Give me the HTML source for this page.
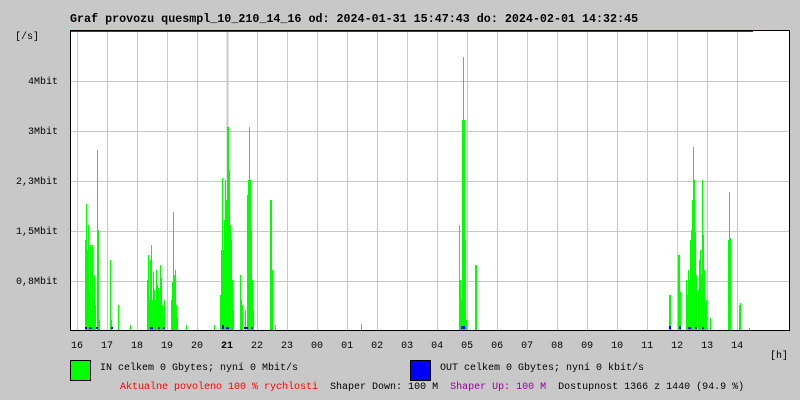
<!DOCTYPE html>
<html><head><meta charset="utf-8"><style>
body{margin:0;width:800px;height:400px;background:#c8c8c8;overflow:hidden;position:relative;font-family:"Liberation Mono",monospace;}
.t{position:absolute;font-size:10px;white-space:pre;line-height:12px;color:#000}
</style></head><body>
<div class="t" style="left:70px;top:13px;font-size:11.7px;font-weight:bold;">Graf provozu quesmpl_10_210_14_16 od: 2024-01-31 15:47:43 do: 2024-02-01 14:32:45</div>
<div class="t" style="left:15px;top:32px;">[/s]</div>
<div class="t" style="left:28px;top:77px;">4Mbit</div>
<div class="t" style="left:28px;top:127px;">3Mbit</div>
<div class="t" style="left:16px;top:177px;">2,3Mbit</div>
<div class="t" style="left:16px;top:227px;">1,5Mbit</div>
<div class="t" style="left:16px;top:277px;">0,8Mbit</div>
<svg style="position:absolute;left:0;top:0" width="800" height="400" shape-rendering="crispEdges">
<rect x="70" y="30" width="720" height="300" fill="#fff"/>
<g stroke="#c8c8c8" stroke-width="1">
<path d="M70 81.5H790M70 131.5H790M70 181.5H790M70 231.5H790M70 281.5H790"/>
<path d="M77.5 31V330M107.5 31V330M137.5 31V330M167.5 31V330M197.5 31V330M257.5 31V330M287.5 31V330M317.5 31V330M347.5 31V330M377.5 31V330M407.5 31V330M437.5 31V330M467.5 31V330M497.5 31V330M527.5 31V330M557.5 31V330M587.5 31V330M617.5 31V330M647.5 31V330M677.5 31V330M707.5 31V330M737.5 31V330"/>
<path d="M227.5 31V330" stroke-width="2"/>
</g>
<g stroke="#00ff00" stroke-width="1.2" fill="none">
<path d="M85.5 330V240M86.5 330V204M87.5 330V250M88.5 330V225M89.5 330V290M90.5 330V245M91.5 330V310M92.5 330V245M93.5 330V300M94.5 330V275M95.5 330V305M97.5 330V150M98.5 330V230M99.5 330V320M110.5 330V260M111.5 330V320M118.5 330V305M130.5 330V325M147.5 330V280M148.5 330V255M149.5 330V300M150.5 330V260M151.5 330V245M152.5 330V300M153.5 330V272M154.5 330V290M155.5 330V300M156.5 330V270M157.5 330V285M158.5 330V288M159.5 330V300M160.5 330V265M161.5 330V278M162.5 330V305M163.5 330V318M164.5 330V300M171.5 330V300M172.5 330V282M173.5 330V212M174.5 330V275M175.5 330V270M176.5 330V305M177.5 330V318M186.5 330V325M214.5 330V325M220.5 330V295M221.5 330V250M222.5 330V178M223.5 330V250M224.5 330V220M225.5 330V180M226.5 330V200M227.5 330V127M228.5 330V127M229.5 330V170M230.5 330V225M231.5 330V240M232.5 330V280M233.5 330V310M240.5 330V275M241.5 330V300M242.5 330V305M245.5 330V310M247.5 330V195M248.5 330V180M249.5 330V127M250.5 330V180M251.5 330V230M252.5 330V280M253.5 330V310M270.5 330V200M271.5 330V200M272.5 330V270M275.5 330V325M361.5 330V324M459.5 330V225M460.5 330V280M461.5 330V300M462.5 330V120M463.5 330V57M464.5 330V120M465.5 330V240M466.5 330V320M475.5 330V265M476.5 330V265M669.5 330V295M670.5 330V295M678.5 330V255M679.5 330V255M680.5 330V292M686.5 330V280M687.5 330V295M688.5 330V270M689.5 330V280M690.5 330V240M691.5 330V230M692.5 330V200M693.5 330V147M694.5 330V180M695.5 330V232M696.5 330V275M698.5 330V290M699.5 330V260M700.5 330V250M701.5 330V275M702.5 330V180M703.5 330V235M704.5 330V270M705.5 330V305M706.5 330V300M710.5 330V318M728.5 330V240M729.5 330V192M730.5 330V238M739.5 330V305M740.5 330V303M749.5 330V328"/>
</g>
<g fill="#0000ff">
<rect x="85" y="327" width="2" height="2"/><rect x="89" y="327" width="3" height="2"/><rect x="96" y="327" width="2" height="2"/><rect x="111" y="327" width="2" height="2"/><rect x="150" y="327" width="3" height="2"/><rect x="158" y="327" width="2" height="2"/><rect x="163" y="327" width="2" height="2"/><rect x="222" y="325" width="2" height="4"/><rect x="226" y="327" width="3" height="2"/><rect x="244" y="327" width="4" height="2"/><rect x="251" y="327" width="2" height="2"/><rect x="461" y="326" width="4" height="3"/><rect x="669" y="326" width="2" height="3"/><rect x="679" y="326" width="2" height="3"/><rect x="688" y="327" width="3" height="2"/><rect x="695" y="327" width="2" height="2"/><rect x="702" y="327" width="2" height="2"/>
</g>
<path d="M70 30.5H790" stroke="#000" stroke-width="1"/>
<path d="M71 31.5H753" stroke="#cc0000" stroke-width="1"/>
<path d="M70.5 30V331M789.5 30V331M70 330.5H790" stroke="#000" stroke-width="1"/>
<rect x="70.5" y="360.5" width="20" height="20" fill="#00ff00" stroke="#000"/>
<rect x="410.5" y="360.5" width="20" height="20" fill="#0000ff" stroke="#000"/>
</svg>
<div class="t" style="left:71px;top:341px;">16   17   18   19   20   <b>21</b>   22   23   00   01   02   03   04   05   06   07   08   09   10   11   12   13   14</div>
<div class="t" style="left:770px;top:351px;">[h]</div>
<div class="t" style="left:100px;top:363px;">IN celkem 0 Gbytes; nyní 0 Mbit/s</div>
<div class="t" style="left:440px;top:363px;">OUT celkem 0 Gbytes; nyní 0 kbit/s</div>
<div class="t" style="left:120px;top:382px;"><span style="color:#ff0000">Aktualne povoleno 100 % rychlosti</span>  Shaper Down: 100 M  <span style="color:#990099">Shaper Up: 100 M</span>  Dostupnost 1366 z 1440 (94.9 %)</div>
</body></html>
